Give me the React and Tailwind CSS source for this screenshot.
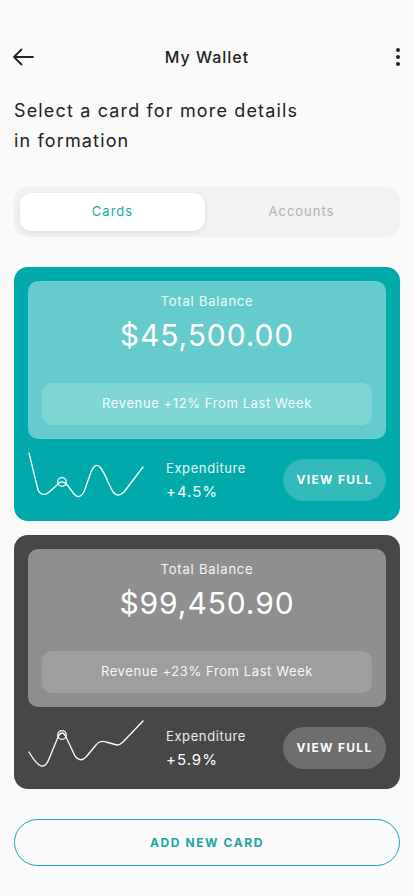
import React from "react";

function Chart1() {
  return (
    <svg width="116" height="60" viewBox="0 0 116 60" fill="none" className="shrink-0">
      <path
        d="M1 3 L10 40 Q13 47 20 43 L28 36 Q34 28 40 36 L46 44 Q51 50 56 42 L63 22 Q67 12 72 17 Q76 22 80 32 L85 42 Q90 48 96 42 L115 17"
        stroke="white"
        strokeWidth="1.3"
        strokeLinecap="round"
        strokeLinejoin="round"
      />
      <circle cx="34" cy="32" r="4.3" stroke="white" strokeWidth="1.3" fill="none" />
    </svg>
  );
}

function Chart2() {
  return (
    <svg width="116" height="66" viewBox="0 0 116 66" fill="none" className="shrink-0">
      <path
        d="M1 37 Q8 49 13 51 Q18 52 21 44 L30 22 Q34 14 38 22 L47 41 Q52 48 58 42 L68 30 Q72 25 78 27 L89 30 Q92 30 95 27 L115 6"
        stroke="white"
        strokeWidth="1.3"
        strokeLinecap="round"
        strokeLinejoin="round"
      />
      <circle cx="34" cy="20" r="4.3" stroke="white" strokeWidth="1.3" fill="none" />
    </svg>
  );
}

function WalletCard({ dark, amount, revenue, exp, chart }) {
  return (
    <div className={`rounded-[14px] px-[14px] pt-[14px] ${dark ? "bg-[#474747]" : "bg-[#00a9aa]"}`}>
      <div className={`rounded-[10px] px-[14px] pt-[12px] pb-[14px] flex flex-col items-center ${dark ? "bg-[#8f8f8f]" : "bg-[#66cbcc]"}`}>
        <div className="text-[13px] leading-[16px] tracking-[0.8px] text-white/90">Total Balance</div>
        <div className="mt-[8px] text-[30px] leading-[36px] tracking-[0.9px] text-white">{amount}</div>
        <div className={`mt-[30px] w-full h-[42px] rounded-[10px] flex items-center justify-center text-[13px] tracking-[0.6px] text-white/95 ${dark ? "bg-[#9e9e9e]" : "bg-[#80d5d5]"}`}>
          {revenue}
        </div>
      </div>
      <div className="h-[82px] flex items-center">
        {chart}
        <div className="ml-[22px] flex flex-col">
          <div className="text-[13px] leading-[20px] tracking-[0.6px] text-white/90">Expenditure</div>
          <div className="mt-[4px] text-[15px] leading-[20px] tracking-[1px] text-white">{exp}</div>
        </div>
        <div className={`ml-auto w-[103px] h-[42px] rounded-full flex items-center justify-center text-[12px] font-bold tracking-[1.3px] text-white ${dark ? "bg-[#6e6e6e]" : "bg-[#33baba]"}`}>
          VIEW FULL
        </div>
      </div>
    </div>
  );
}

export default function App() {
  return (
    <div className="min-h-[896px] bg-[#fafafa] px-[14px] pb-[30px] text-[#222]" style={{ fontFamily: "Inter, 'Noto Sans', sans-serif" }}>
      <div className="pt-[40px] h-[74px] grid grid-cols-[1fr_auto_1fr] items-center">
        <svg width="22" height="18" viewBox="0 0 22 18" fill="none" className="-ml-[2px]">
          <path d="M21 9 H2 M9.5 1.5 L2 9 L9.5 16.5" stroke="#222" strokeWidth="1.8" strokeLinecap="round" strokeLinejoin="round" />
        </svg>
        <div className="text-[16px] font-medium tracking-[1px] text-[#222]">My Wallet</div>
        <div className="flex justify-end">
          <svg width="6" height="20" viewBox="0 0 6 20" className="-mr-[1px]">
            <circle cx="3" cy="3" r="2" fill="#222" />
            <circle cx="3" cy="10" r="2" fill="#222" />
            <circle cx="3" cy="17" r="2" fill="#222" />
          </svg>
        </div>
      </div>
      <div className="mt-[22px] text-[18px] leading-[30px] tracking-[1.15px] text-[#222]">
        Select a card for more details
        <br />
        in formation
      </div>
      <div className="mt-[31px] h-[50px] rounded-[14px] bg-[#f1f1f1] p-[6px] grid grid-cols-2 gap-[4px]">
        <div className="rounded-[12px] bg-white shadow-[0_2px_6px_rgba(0,0,0,0.08)] flex items-center justify-center text-[13px] tracking-[1px] text-[#22aaaa]">
          Cards
        </div>
        <div className="flex items-center justify-center text-[13px] tracking-[1px] text-[#b3b3b3]">Accounts</div>
      </div>
      <div className="mt-[30px] flex flex-col gap-[14px]">
        <WalletCard amount="$45,500.00" revenue="Revenue +12% From Last Week" exp="+4.5%" chart={<Chart1 />} />
        <WalletCard dark amount="$99,450.90" revenue="Revenue +23% From Last Week" exp="+5.9%" chart={<Chart2 />} />
      </div>
      <div className="mt-[30px] h-[47px] rounded-full border border-[#1aa5a8] flex items-center justify-center text-[12px] font-bold tracking-[1.6px] text-[#1aa5a8]">
        ADD NEW CARD
      </div>
    </div>
  );
}
